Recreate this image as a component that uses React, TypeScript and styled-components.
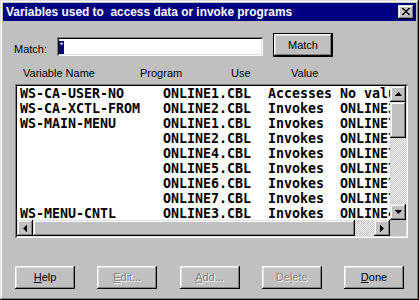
import React from "react";
import styled, { createGlobalStyle, css } from "styled-components";

const GlobalStyle = createGlobalStyle`
  html, body { margin: 0; padding: 0; background: #c0c0c0; }
  body { font-family: "Liberation Sans", Arial, sans-serif; font-size: 11px; color: #000; }
`;

const raised = css`
  box-shadow: inset -1px -1px #000, inset 1px 1px #fff, inset -2px -2px #808080, inset 2px 2px #dfdfdf;
`;

const raisedScroll = css`
  box-shadow: inset -1px -1px #000, inset 1px 1px #dfdfdf, inset -2px -2px #808080, inset 2px 2px #fff;
`;

const sunken = css`
  box-shadow: inset 1px 1px #808080, inset -1px -1px #fff, inset 2px 2px #000, inset -2px -2px #dfdfdf;
`;

const Window = styled.div`
  width: 419px;
  height: 300px;
  box-sizing: border-box;
  padding: 3px;
  background: #c0c0c0;
  box-shadow: inset -1px -1px #000, inset 1px 1px #dfdfdf, inset -2px -2px #808080, inset 2px 2px #fff;
  display: flex;
  flex-direction: column;
`;

const TitleBar = styled.div`
  height: 18px;
  background: #000080;
  display: flex;
  align-items: center;
  padding: 0 2px 0 3px;
`;

const Title = styled.div`
  flex: 1;
  color: #fff;
  font-weight: bold;
  font-size: 11.9px;
  line-height: 13px;
  white-space: pre;
`;

const CloseButton = styled.div`
  width: 16px;
  height: 14px;
  background: #c0c0c0;
  ${raisedScroll};
  display: flex;
  align-items: center;
  justify-content: center;
  padding-bottom: 1px;
  box-sizing: border-box;
`;

const Client = styled.div`
  display: flex;
  flex-direction: column;
`;

const MatchRow = styled.div`
  margin-top: 12px;
  height: 24px;
  padding-left: 11px;
  display: flex;
  align-items: flex-start;
`;

const Label = styled.div`
  width: 43px;
  margin-top: 10px;
  line-height: 13px;
`;

const TextInput = styled.div`
  width: 206px;
  height: 19px;
  margin-top: 4px;
  box-sizing: border-box;
  padding: 2px;
  background: #fff;
  ${sunken};
  display: flex;
  align-items: flex-end;
`;

const Selected = styled.span`
  width: 5px;
  height: 13px;
  background: #000080;
  color: #fff;
  font-size: 9px;
  line-height: 9px;
  text-align: center;
  overflow: hidden;
`;

const PushButton = styled.div<{ $default?: boolean; $disabled?: boolean }>`
  width: 60px;
  height: 23px;
  box-sizing: border-box;
  background: #c0c0c0;
  ${raised};
  display: flex;
  align-items: center;
  justify-content: center;
  line-height: 13px;
  color: ${(p) => (p.$disabled ? "#808080" : "#000")};
  text-shadow: ${(p) => (p.$disabled ? "1px 1px #fff" : "none")};
  ${(p) =>
    p.$default &&
    css`
      height: 24px;
      margin-left: 10px;
      box-shadow: inset 0 0 0 1px #000, inset -2px -2px #000, inset 2px 2px #fff, inset -3px -3px #808080,
        inset 3px 3px #dfdfdf;
    `}
`;

const Headers = styled.div`
  margin-top: 10px;
  padding-left: 20px;
  display: grid;
  grid-template-columns: 117px 91px 60px auto;
  line-height: 13px;
`;

const ListBox = styled.div`
  margin: 4px 0 0 12px;
  width: 393px;
  height: 154px;
  box-sizing: border-box;
  padding: 2px;
  background: #fff;
  ${sunken};
  display: grid;
  grid-template-columns: 1fr 16px;
  grid-template-rows: 1fr 16px;
`;

const Viewport = styled.div`
  overflow: hidden;
  padding-left: 3px;
`;

const Row = styled.div`
  height: 15px;
  display: grid;
  grid-template-columns: 143px 105px 72px 200px;
  font-family: "DejaVu Sans Mono", "Liberation Mono", monospace;
  font-weight: bold;
  font-size: 13.3px;
  line-height: 15px;
  white-space: pre;
`;

const Cell = styled.span`
  overflow: hidden;
`;

const VScroll = styled.div`
  display: flex;
  flex-direction: column;
`;

const HScroll = styled.div`
  display: flex;
`;

const ScrollButton = styled.div`
  width: 16px;
  height: 16px;
  flex: none;
  box-sizing: border-box;
  background: #c0c0c0;
  ${raisedScroll};
  display: flex;
  align-items: center;
  justify-content: center;
`;

const Thumb = styled.div<{ $size: number; $horizontal?: boolean }>`
  flex: none;
  background: #c0c0c0;
  ${raisedScroll};
  ${(p) => (p.$horizontal ? `width: ${p.$size}px; height: 16px;` : `height: ${p.$size}px; width: 16px;`)}
`;

const Track = styled.div`
  flex: 1;
  background-color: #fff;
  background-image: repeating-conic-gradient(#c0c0c0 0 25%, #fff 0 50%);
  background-size: 2px 2px;
`;

const Corner = styled.div`
  background: #c0c0c0;
`;

const ButtonRow = styled.div`
  margin: 28px 0 0 12px;
  width: 389px;
  display: flex;
  justify-content: space-between;
`;

const Arrow = ({ dir }: { dir: "up" | "down" | "left" | "right" }) => {
  const vertical = dir === "up" || dir === "down";
  const w = vertical ? 7 : 4;
  const h = vertical ? 4 : 7;
  let d = "";
  if (dir === "up") d = "M3 0h1v1h-1z M2 1h3v1h-3z M1 2h5v1h-5z M0 3h7v1h-7z";
  if (dir === "down") d = "M0 0h7v1h-7z M1 1h5v1h-5z M2 2h3v1h-3z M3 3h1v1h-1z";
  if (dir === "left") d = "M3 0h1v7h-1z M2 1h1v5h-1z M1 2h1v3h-1z M0 3h1v1h-1z";
  if (dir === "right") d = "M0 0h1v7h-1z M1 1h1v5h-1z M2 2h1v3h-1z M3 3h1v1h-1z";
  return (
    <svg width={w} height={h} viewBox={`0 0 ${w} ${h}`} shapeRendering="crispEdges">
      <path d={d} fill="#000" />
    </svg>
  );
};

const CloseGlyph = () => (
  <svg width="8" height="7" viewBox="0 0 8 7" shapeRendering="crispEdges">
    <path
      d="M0 0h2v1h-2z M6 0h2v1h-2z M1 1h2v1h-2z M5 1h2v1h-2z M2 2h4v1h-4z M3 3h2v1h-2z M2 4h4v1h-4z M1 5h2v1h-2z M5 5h2v1h-2z M0 6h2v1h-2z M6 6h2v1h-2z"
      fill="#000"
    />
  </svg>
);

const rows = [
  ["WS-CA-USER-NO", "ONLINE1.CBL", "Accesses", "No value"],
  ["WS-CA-XCTL-FROM", "ONLINE2.CBL", "Invokes", "ONLINE3.CBL"],
  ["WS-MAIN-MENU", "ONLINE1.CBL", "Invokes", "ONLINE7.CBL"],
  ["", "ONLINE2.CBL", "Invokes", "ONLINE7.CBL"],
  ["", "ONLINE4.CBL", "Invokes", "ONLINE7.CBL"],
  ["", "ONLINE5.CBL", "Invokes", "ONLINE7.CBL"],
  ["", "ONLINE6.CBL", "Invokes", "ONLINE7.CBL"],
  ["", "ONLINE7.CBL", "Invokes", "ONLINE7.CBL"],
  ["WS-MENU-CNTL", "ONLINE3.CBL", "Invokes", "ONLINE4.CBL"],
];

export default function App() {
  return (
    <>
      <GlobalStyle />
      <Window>
        <TitleBar>
          <Title>Variables used to  access data or invoke programs</Title>
          <CloseButton>
            <CloseGlyph />
          </CloseButton>
        </TitleBar>
        <Client>
          <MatchRow>
            <Label>Match:</Label>
            <TextInput>
              <Selected>*</Selected>
            </TextInput>
            <PushButton $default>Match</PushButton>
          </MatchRow>
          <Headers>
            <span>Variable Name</span>
            <span>Program</span>
            <span>Use</span>
            <span>Value</span>
          </Headers>
          <ListBox>
            <Viewport>
              {rows.map((r, i) => (
                <Row key={i}>
                  {r.map((c, j) => (
                    <Cell key={j}>{c}</Cell>
                  ))}
                </Row>
              ))}
            </Viewport>
            <VScroll>
              <ScrollButton>
                <Arrow dir="up" />
              </ScrollButton>
              <Thumb $size={36} />
              <Track />
              <ScrollButton>
                <Arrow dir="down" />
              </ScrollButton>
            </VScroll>
            <HScroll>
              <ScrollButton>
                <Arrow dir="left" />
              </ScrollButton>
              <Thumb $size={322} $horizontal />
              <Track />
              <ScrollButton>
                <Arrow dir="right" />
              </ScrollButton>
            </HScroll>
            <Corner />
          </ListBox>
          <ButtonRow>
            <PushButton>
              <span>
                <u>H</u>elp
              </span>
            </PushButton>
            <PushButton $disabled>
              <span>
                <u>E</u>dit...
              </span>
            </PushButton>
            <PushButton $disabled>
              <span>
                <u>A</u>dd...
              </span>
            </PushButton>
            <PushButton $disabled>
              <span>
                De<u>l</u>ete
              </span>
            </PushButton>
            <PushButton>
              <span>
                <u>D</u>one
              </span>
            </PushButton>
          </ButtonRow>
        </Client>
      </Window>
    </>
  );
}
